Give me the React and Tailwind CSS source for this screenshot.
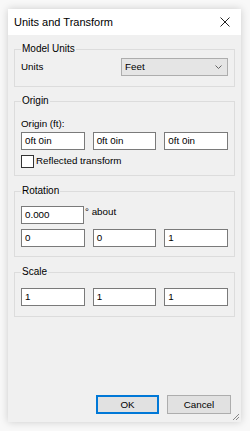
import React from 'react'

const font = { fontFamily: '"Liberation Sans", Arial, sans-serif' }

const Field = ({ value, className = '' }) => (
  <div
    className={`h-[18px] bg-white border border-[#7a7a7a] flex items-center pl-[3px] text-[9.8px] text-black leading-none ${className}`}
  >
    {value}
  </div>
)

const Group = ({ title, children, className = '' }) => (
  <fieldset className={`border border-[#dcdcdc] mx-[6px] px-[6px] ${className}`}>
    <legend className="px-[1px] text-[10px] leading-[16px] text-black">{title}</legend>
    {children}
  </fieldset>
)

const Triple = ({ values, className = '' }) => (
  <div className={`grid grid-cols-3 gap-[8px] ${className}`}>
    {values.map((v, i) => (
      <Field key={i} value={v} />
    ))}
  </div>
)

export default function App() {
  return (
    <div className="w-[250px] h-[431px] bg-[#f8f8f8] pt-[9px] pl-[8px]" style={font}>
      <div className="w-[233px] h-[413px] bg-[#f0f0f0] shadow-[0_0_8px_rgba(0,0,0,0.18)] flex flex-col relative">
        {/* title bar */}
        <div className="h-[26px] bg-white flex items-center justify-between pl-[6px] pr-[11px]">
          <span className="text-[11px] text-black">Units and Transform</span>
          <svg width="10" height="10" viewBox="0 0 10 10">
            <path d="M0.5 0.5 L9.5 9.5 M9.5 0.5 L0.5 9.5" stroke="#222" strokeWidth="1" />
          </svg>
        </div>

        <Group title="Model Units" className="mt-[6px] pb-[10px]">
          <div className="flex items-center justify-between mt-[1px]">
            <span className="text-[9.8px] text-black">Units</span>
            <div className="w-[107px] h-[18px] bg-[#e5e5e5] border border-[#adadad] flex items-center justify-between pl-[3px] pr-[5px] text-[9.8px] text-black">
              <span>Feet</span>
              <svg width="7" height="4" viewBox="0 0 7 4">
                <path d="M0.5 0.5 L3.5 3.5 L6.5 0.5" stroke="#555" strokeWidth="0.9" fill="none" />
              </svg>
            </div>
          </div>
        </Group>

        <Group title="Origin" className="mt-[6px] pb-[7px]">
          <div className="text-[9.8px] leading-[14px] text-black mt-[8px]">Origin (ft):</div>
          <Triple values={['0ft 0in', '0ft 0in', '0ft 0in']} className="mt-[1px]" />
          <div className="flex items-center mt-[5px] h-[13px]">
            <div className="w-[13px] h-[13px] bg-white border border-[#333]" />
            <span className="ml-[2px] text-[9.8px] text-black">Reflected transform</span>
          </div>
        </Group>

        <Group title="Rotation" className="mt-[7px] pb-[9px]">
          <div className="flex items-start mt-[7px]">
            <Field value="0.000" className="w-[63px]" />
            <span className="text-[9.8px] leading-[12px] text-black ml-[1px]">° about</span>
          </div>
          <Triple values={['0', '0', '1']} className="mt-[5px]" />
        </Group>

        <Group title="Scale" className="mt-[7px] pb-[10px]">
          <Triple values={['1', '1', '1']} className="mt-[8px]" />
        </Group>

        <div className="flex-1" />

        <div className="flex justify-end gap-[8px] pr-[10px] pb-[8px]">
          <button className="w-[63px] h-[19px] bg-[#e1e1e1] border-2 border-[#0078d7] text-[9.8px] text-black leading-none">
            OK
          </button>
          <button className="w-[64px] h-[19px] bg-[#e1e1e1] border border-[#adadad] text-[9.8px] text-black leading-none">
            Cancel
          </button>
        </div>

        <svg width="8" height="8" viewBox="0 0 8 8" className="absolute right-[1px] bottom-[1px]">
          <path d="M7 1 L1 7 M7 4 L4 7" stroke="#888" strokeWidth="1" />
        </svg>
      </div>
    </div>
  )
}
